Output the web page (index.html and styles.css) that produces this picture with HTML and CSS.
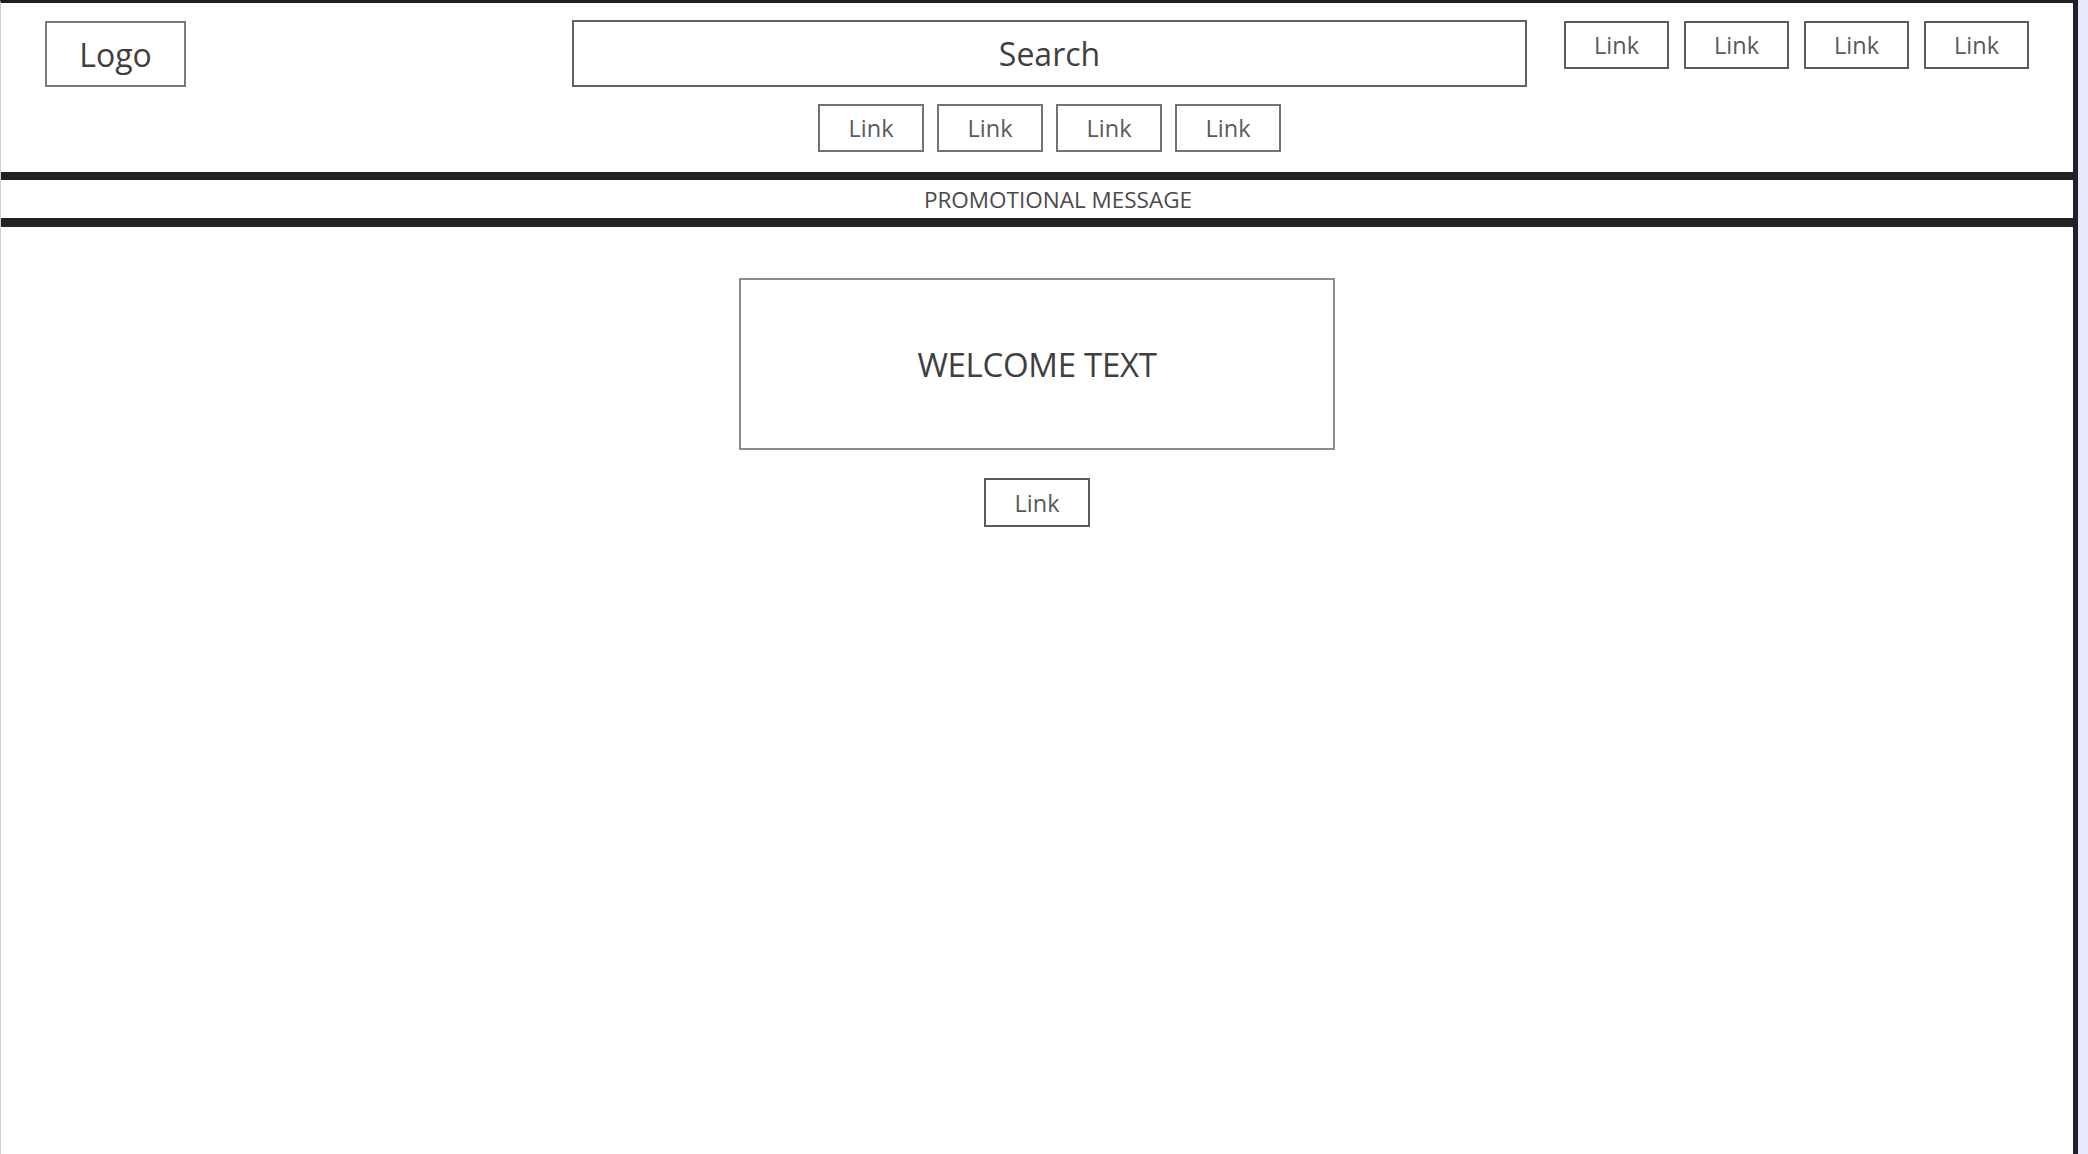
FILE: index.html
```html
<!DOCTYPE html>
<html lang="en">
<head>
<meta charset="utf-8">
<title>Wireframe</title>
<link rel="stylesheet" href="styles.css">
</head>
<body>
<div class="page">
  <header class="header">
    <div class="logo box">Logo</div>
    <div class="center-col">
      <div class="search box">Search</div>
      <nav class="links links-center">
        <a class="link">Link</a>
        <a class="link">Link</a>
        <a class="link">Link</a>
        <a class="link">Link</a>
      </nav>
    </div>
    <nav class="links links-right">
      <a class="link">Link</a>
      <a class="link">Link</a>
      <a class="link">Link</a>
      <a class="link">Link</a>
    </nav>
  </header>
  <div class="promo">PROMOTIONAL MESSAGE</div>
  <main class="main">
    <div class="welcome box">WELCOME TEXT</div>
    <a class="link">Link</a>
  </main>
</div>
</body>
</html>
```

FILE: styles.css
```css
html, body {
  margin: 0;
  padding: 0;
  height: 100%;
}

body {
  background: #e6e8fb;
  font-family: "Open Sans", "Noto Sans", sans-serif;
  color: #3f3f3f;
}

.page {
  box-sizing: border-box;
  width: 2078px;
  height: 100%;
  background: #fff;
  border-top: 3px solid #202020;
  border-left: 1px solid #cfcfcf;
  border-right: 5px solid #202020;
  display: flex;
  flex-direction: column;
}

.box {
  box-sizing: border-box;
  border: 2px solid #6e6e6e;
  display: flex;
  align-items: center;
  justify-content: center;
}

.header {
  box-sizing: border-box;
  height: 177px;
  padding: 17px 0 0 44px;
  border-bottom: 8px solid #222;
  display: flex;
  align-items: flex-start;
  flex-shrink: 0;
}

.logo {
  width: 141px;
  height: 66px;
  margin-top: 1px;
  font-size: 32px;
  border-color: #7a7a7a;
}

.center-col {
  width: 955px;
  margin-left: 386px;
  display: flex;
  flex-direction: column;
  align-items: center;
}

.search {
  width: 955px;
  height: 67px;
  font-size: 32px;
  border-color: #626262;
}

.links {
  display: flex;
}

.links-center {
  margin-top: 17px;
  gap: 13px;
}

.links-right {
  margin-left: 37px;
  margin-top: 1px;
  gap: 15px;
}

.link {
  box-sizing: border-box;
  width: 105px;
  height: 48px;
  border: 2px solid #5c5c5c;
  display: flex;
  align-items: center;
  justify-content: center;
  font-size: 23.5px;
  color: #595959;
  text-decoration: none;
}

.links-center .link {
  width: 106px;
  border-color: #737373;
}

.promo {
  box-sizing: border-box;
  height: 47px;
  padding-left: 42px;
  border-bottom: 9px solid #242424;
  display: flex;
  align-items: center;
  justify-content: center;
  font-size: 22.5px;
  color: #4a4a4a;
  flex-shrink: 0;
}

.main {
  flex: 1;
  display: flex;
  flex-direction: column;
  align-items: center;
  padding-top: 51px;
}

.welcome {
  width: 596px;
  height: 172px;
  font-size: 33px;
  letter-spacing: -0.3px;
  border-color: #8c8c8c;
}

.main .link {
  margin-top: 28px;
  width: 106px;
  height: 49px;
}
```
